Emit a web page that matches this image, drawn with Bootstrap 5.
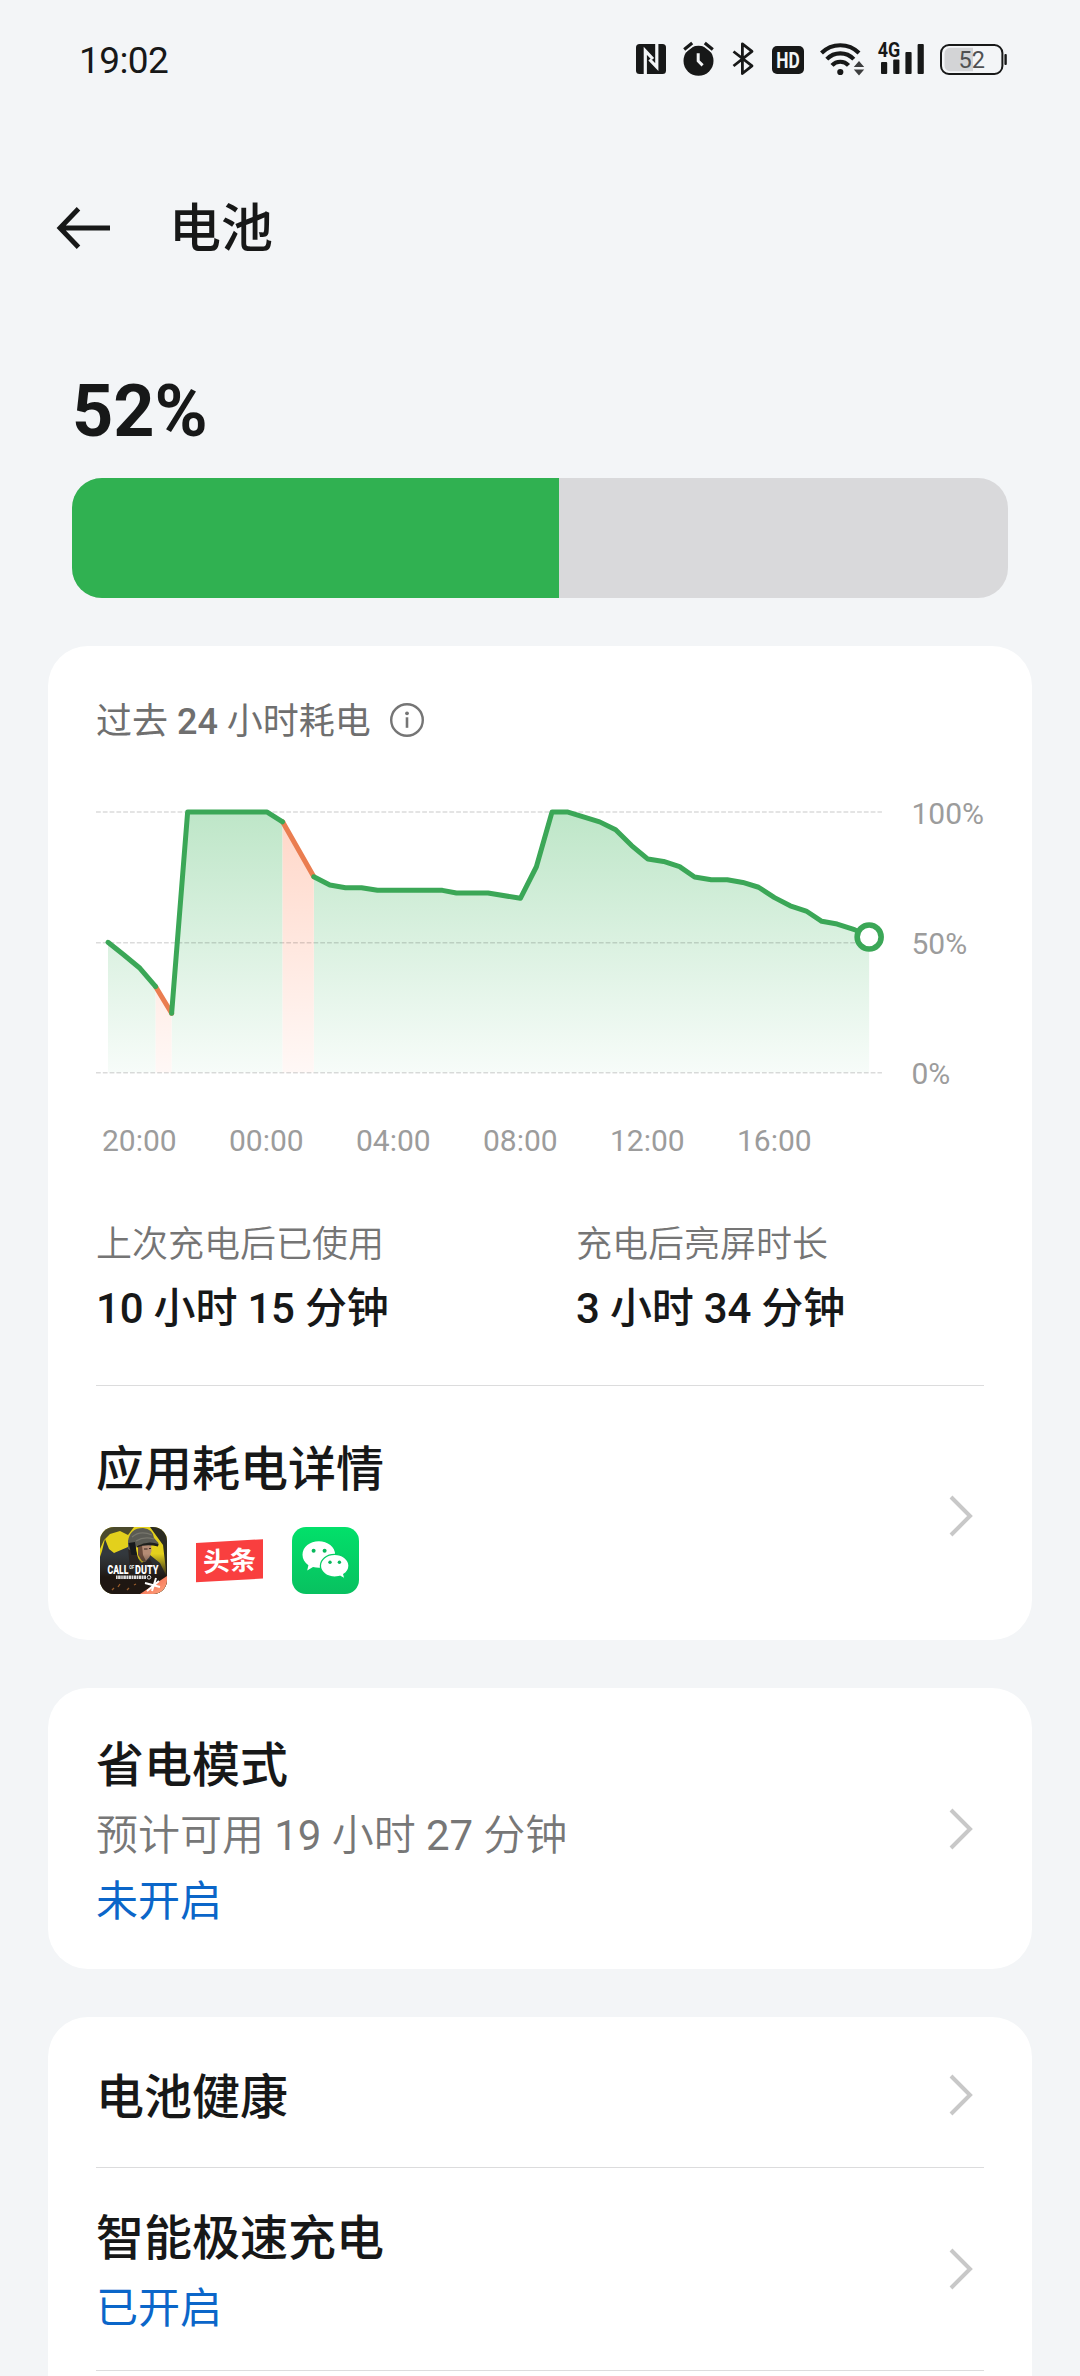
<!DOCTYPE html>
<html lang="zh-CN">
<head>
<meta charset="utf-8">
<meta name="viewport" content="width=device-width, initial-scale=1">
<title>电池</title>
<link href="https://cdn.jsdelivr.net/npm/bootstrap@5.3.0/dist/css/bootstrap.min.css" rel="stylesheet">
<style>
  body { background: #f3f5f7; color: #171818; font-family: Roboto, "Noto Sans CJK SC", sans-serif; }
  .screen { width: 1080px; height: 2376px; }
  .status-bar { height: 120px; padding: 0 72px 0 79px; }
  .clock { font-size: 37px; line-height: 48px; letter-spacing: -.6px; margin-top: 1px; }
  .status-icons svg { height: 36px; display: block; overflow: visible; }
  .status-icons .nfc { margin-right: 17px; }
  .status-icons .alarm { margin-right: 18px; }
  .status-icons .bt { margin-right: 18px; }
  .status-icons .hd { margin-right: 16px; }
  .status-icons .wifi { margin-right: 13px; }
  .status-icons .cell { margin-right: 16px; }
  .title-bar { height: 216px; padding: 0 56px; }
  .page-title { font-size: 52px; line-height: 68px; font-weight: 500; margin: 4px 0 0 57px; }
  .level { padding: 34px 72px 0; }
  .level-num { font-size: 72px; line-height: 84px; font-weight: 700; }
  .level .progress { height: 120px; margin-top: 24px; border-radius: 30px; background: #d9d9db; }
  .level .progress-bar { background: #30b151; }
  .panel { margin: 48px 48px 0; border: 0; border-radius: 40px; background: #fff; padding: 0 48px; color: inherit; }
  .panel-caption { padding-top: 52px; font-size: 36px; line-height: 48px; font-weight: 400; color: #6f6f6f; }
  .panel-caption svg { margin-left: 18px; margin-top: -4px; }
  .chart-row { margin-top: 44px; }
  .y-axis { height: 304px; padding-top: 4px; margin-left: 24px; }
  .axis-text { font-size: 30px; line-height: 40px; color: #9c9c9c; }
  .x-axis { margin-top: 27px; padding-left: 6px; }
  .x-axis span { width: 127px; }
  .stats { margin-top: 60px; }
  .stat { width: 480px; }
  .stat-label { font-size: 36px; line-height: 48px; color: #757575; font-weight: 350; }
  .stat-value { font-size: 42px; line-height: 60px; margin-top: 10px; font-weight: 500; letter-spacing: -.2px; white-space: nowrap; }
  .rule { height: 1px; background: #dcdcdd; }
  .rule-stats { margin-top: 46px; }
  .item-title { font-size: 48px; line-height: 64px; font-weight: 500; }
  .item-note { font-size: 42px; line-height: 60px; color: #777; font-weight: 350; margin-top: 8px; }
  .item-state { font-size: 42px; line-height: 60px; color: #0b66c9; font-weight: 400; }
  .item-apps { padding: 52px 0 46px; }
  .app-icons { margin-top: 25px; padding-left: 4px; gap: 29px; }
  .app-icons svg { display: block; }
  .chevron { margin-right: 10px; flex: none; }
  .item-saver .item-text { padding: 46px 0 37px; }
  .item-saver .item-state { margin-top: 6px; }
  .item-health .item-text { padding: 49px 0 37px; }
  .item-health .chevron { margin-top: 5px; }
  .item-charge .item-text { padding: 39px 0 31px; }
  .item-charge .item-state { margin-top: 8px; }
  .panel-last { border-radius: 40px 40px 0 0; }
</style>
</head>
<body>
<svg width="0" height="0" class="position-absolute" aria-hidden="true">
  <symbol id="chev" viewBox="0 0 26 44"><path d="M3 3 L22 22 L3 41" fill="none" stroke="#c8c8c8" stroke-width="4"/></symbol>
</svg>
<div class="screen d-flex flex-column overflow-hidden">

  <div class="status-bar d-flex justify-content-between align-items-center flex-shrink-0">
    <div class="clock">19:02</div>
    <div class="status-icons d-flex align-items-center">
      <svg class="nfc" width="30" viewBox="0 0 30 36">
        <rect x="0" y="2" width="30" height="30" rx="3.5" fill="#171818"/>
        <path d="M9.3 32 V8.8 L17 17" fill="none" stroke="#f3f5f7" stroke-width="3.2"/>
        <path d="M20.8 2 V25 L13.5 17.5" fill="none" stroke="#f3f5f7" stroke-width="3.2"/>
      </svg>
      <svg class="alarm" width="31" viewBox="0 0 31 36">
        <circle cx="15.5" cy="18.8" r="15" fill="#171818"/>
        <path d="M1.2 8 L9.2 1.6 M29.8 8 L21.8 1.6" stroke="#f3f5f7" stroke-width="6"/>
        <path d="M1.2 7.4 L9.2 1 M29.8 7.4 L21.8 1" stroke="#171818" stroke-width="3.2"/>
        <path d="M15.2 11.3 V19 L19.6 23.4" fill="none" stroke="#f3f5f7" stroke-width="3"/>
      </svg>
      <svg class="bt" width="22" viewBox="0 0 22 36">
        <path d="M1.5 9.5 L20 23.8 L10.4 31.5 V1.8 L20 9.3 L1.5 24" fill="none" stroke="#171818" stroke-width="2.8" stroke-linejoin="round"/>
      </svg>
      <svg class="hd" width="32" viewBox="0 0 32 36">
        <rect x="0" y="4" width="32" height="28" rx="5" fill="#171818"/>
        <text x="4.3" y="25.7" font-family="Roboto, sans-serif" font-weight="700" font-size="21.5" textLength="23.5" lengthAdjust="spacingAndGlyphs" fill="#f3f5f7">HD</text>
      </svg>
      <svg class="wifi" width="45" viewBox="0 0 45 36">
        <g fill="none" stroke="#171818" stroke-width="4.1">
          <path d="M1.5 11 A26.5 26.5 0 0 1 39 11"/>
          <path d="M6.8 17.2 A18.6 18.6 0 0 1 33.8 17.2"/>
          <path d="M12 23.4 A11 11 0 0 1 28.5 23.4"/>
        </g>
        <circle cx="20.3" cy="30" r="3.1" fill="#171818"/>
        <path d="M33.8 25 L39 19 L44.2 25 Z M33.8 27.5 H44.2 L39 33.5 Z" fill="#3d3e3f"/>
      </svg>
      <svg class="cell" width="46" viewBox="0 0 46 36">
        <text x="-.3" y="15.2" font-family="Roboto, sans-serif" font-weight="700" font-size="19.5" textLength="22.5" lengthAdjust="spacingAndGlyphs" fill="#171818">4G</text>
        <g fill="#171818"><rect x="3" y="20" width="6.2" height="12" rx="1"/><rect x="15.2" y="17.5" width="6.2" height="14.5" rx="1"/><rect x="27.4" y="10" width="6.2" height="22" rx="1"/><rect x="39.6" y="2" width="6.2" height="30" rx="1"/></g>
      </svg>
      <svg width="68" viewBox="0 0 68 36">
        <rect x="1" y="3" width="61.4" height="29" rx="8" fill="none" stroke="#171818" stroke-width="2"/>
        <path d="M10 5.8 H33 V29.2 H10 A5.5 5.5 0 0 1 4.5 23.7 V11.3 A5.5 5.5 0 0 1 10 5.8 Z" fill="#d3d4d6"/>
        <rect x="64.4" y="12" width="2.4" height="11" rx="1" fill="#171818"/>
        <text x="18.6" y="26" font-family="Roboto, sans-serif" font-size="23.5" fill="#505152">52</text>
      </svg>
    </div>
  </div>

  <header class="title-bar d-flex align-items-center flex-shrink-0">
    <svg width="56" height="44" viewBox="0 0 56 44"><path d="M54 22 H5 M22.5 2.8 L4 22 L22.5 41.2" fill="none" stroke="#171818" stroke-width="4.9"/></svg>
    <h1 class="page-title">电池</h1>
  </header>

  <section class="level flex-shrink-0">
    <div class="level-num">52%</div>
    <div class="progress"><div class="progress-bar" style="width:52%"></div></div>
  </section>

  <section class="panel card flex-shrink-0">
    <div class="panel-caption d-flex align-items-center">
      <span>过去 <span class="fw-medium" style="font-weight:500">24</span> 小时耗电</span>
      <svg width="36" height="36" viewBox="0 0 36 36"><circle cx="18" cy="18" r="15.8" fill="none" stroke="#757575" stroke-width="2.4"/><circle cx="18" cy="11.3" r="1.9" fill="#757575"/><path d="M18 15.3 V25.8" stroke="#757575" stroke-width="2.6"/></svg>
    </div>
    <div class="chart-row d-flex align-items-start">
      <svg width="792" height="300" viewBox="96 790 792 300">
        <defs>
          <linearGradient id="gg" gradientUnits="userSpaceOnUse" x1="0" y1="812" x2="0" y2="1072"><stop offset="0" stop-color="#bee6c8"/><stop offset="1" stop-color="#f7fcf9"/></linearGradient>
          <linearGradient id="go" gradientUnits="userSpaceOnUse" x1="0" y1="812" x2="0" y2="1072"><stop offset="0" stop-color="#ffd6c7"/><stop offset="1" stop-color="#fff8f6"/></linearGradient>
        </defs>
        <g fill="url(#gg)">
          <path d="M108 942.3 L140 968.3 L155.7 986.7 V1072.5 H108 Z"/>
          <path d="M171.7 1013.3 L187.7 812 H267.3 L282.7 821.7 V1072.5 H171.7 Z"/>
          <path d="M314 876.7 L330 885 L345.7 887.7 H361.7 L377.7 890.3 H442.7 L456.7 893 H488.3 L520.7 898.3 L536.7 866.7 L552.3 812 H568.3 L600 821.8 L616 829.7 L632 845.5 L648.3 859 L664 861.4 L680 866.6 L695 877 L711.7 879.7 H727.7 L743.3 882.4 L759 887.2 L775 897.6 L790.7 905.8 L806.7 911 L822.3 921.3 L837.7 924 L855 929.6 L869.7 937 V1072.5 H314 Z"/>
        </g>
        <g fill="url(#go)">
          <path d="M155.7 986.7 L171.7 1013.3 V1072.5 H155.7 Z"/>
          <path d="M282.7 821.7 L314 876.7 V1072.5 H282.7 Z"/>
        </g>
        <path d="M96 812 H882.5 M96 942.7 H882.5 M96 1072.8 H882.5" stroke="#000" stroke-opacity=".14" stroke-width="1.5" stroke-dasharray="4.8 2"/>
        <g fill="none" stroke="#3ba757" stroke-width="5" stroke-linejoin="round" stroke-linecap="round">
          <path d="M155.7 986.7 L171.7 1013.3 M282.7 821.7 L314 876.7" stroke="#ea7d50"/>
          <path d="M108 942.3 L124 955 L140 968.3 L155.7 986.7"/>
          <path d="M171.7 1013.3 L187.7 812 H267.3 L282.7 821.7"/>
          <path d="M314 876.7 L330 885 L345.7 887.7 H361.7 L377.7 890.3 H442.7 L456.7 893 H488.3 L520.7 898.3 L536.7 866.7 L552.3 812 H568.3 L600 821.8 L616 829.7 L632 845.5 L648.3 859 L664 861.4 L680 866.6 L695 877 L711.7 879.7 H727.7 L743.3 882.4 L759 887.2 L775 897.6 L790.7 905.8 L806.7 911 L822.3 921.3 L837.7 924 L855 929.6 L869.7 937"/>
        </g>
        <circle cx="869.7" cy="937" r="12" fill="#fff" stroke="#3ba757" stroke-width="5.6"/>
      </svg>
      <div class="y-axis axis-text d-flex flex-column justify-content-between"><span>100%</span><span>50%</span><span>0%</span></div>
    </div>
    <div class="x-axis axis-text d-flex"><span>20:00</span><span>00:00</span><span>04:00</span><span>08:00</span><span>12:00</span><span>16:00</span></div>
    <div class="stats d-flex">
      <div class="stat"><div class="stat-label">上次充电后已使用</div><div class="stat-value">10 小时 15 分钟</div></div>
      <div><div class="stat-label">充电后亮屏时长</div><div class="stat-value">3 小时 34 分钟</div></div>
    </div>
    <div class="rule rule-stats"></div>
    <div class="item-apps d-flex justify-content-between align-items-center">
      <div>
        <div class="item-title">应用耗电详情</div>
        <div class="app-icons d-flex">
          <svg width="67" height="67" viewBox="0 0 67 67">
            <defs>
              <clipPath id="cod"><rect width="67" height="67" rx="14"/></clipPath>
              <linearGradient id="dk" x1="0" y1="0" x2="0" y2="1"><stop offset=".4" stop-color="#25241f" stop-opacity="0"/><stop offset=".75" stop-color="#1f1712"/></linearGradient>
              <linearGradient id="badge" x1="0" y1="0" x2="1" y2="1"><stop offset="0" stop-color="#f0543c"/><stop offset="1" stop-color="#ffa982"/></linearGradient>
            </defs>
            <g clip-path="url(#cod)">
              <rect width="67" height="67" fill="#e3d01c"/>
              <path d="M0 0 H34 L28 8 L20 4 L10 7 L4 13 L0 22 Z" fill="#4b4a2c"/>
              <path d="M50 0 H67 V52 L63 18 Z" fill="#2c2c22"/>
              <path d="M2 24 L5 12 L9 22 L14 26 L28 20 L42 36 L50 28 L60 36 L67 50 V67 H0 V30 Z" fill="#33383d"/>
              <path d="M28 20 L34 18 L40 37 L50 32 L54 40 L30 42 Z" fill="#2c2522"/>
              <path d="M38 18 L51 16 L51.5 24 L49.5 30 L45 35 L40 31 Z" fill="#b58c75"/>
              <path d="M38 18 L42 18 L43 28 L46 34 L42 34 L38 28 Z" fill="#6d4d3d"/>
              <path d="M44 22 h3.5 M49 21.5 h2" stroke="#3a2620" stroke-width="1.2"/>
              <path d="M28 14 Q30 1 43 1 Q53 2 54 11 L58.5 16 L58 19 Q48 14 37 19 L34 25 L28 22 Z" fill="#5b5b54"/>
              <path d="M32 10 Q40 3 52 8 M36 14 Q44 9 54 12" fill="none" stroke="#77766c" stroke-width="1.3"/>
              <path d="M37 19 Q48 13 58.5 17 L58 19.5 Q46 16.5 37 20.5 Z" fill="#1f201d"/>
              <path d="M28.5 16 L35 15 L37 28 L31.5 28 Z" fill="#17191b"/>
              <rect width="67" height="67" fill="url(#dk)"/>
              <path d="M18 60 l2 -3 M27 63 l2 -2 M12 63 l2 -2 M34 58 l2 -1" stroke="#9a5d2b" stroke-width="1.3"/>
              <path d="M40 67 L67 49 V67 Z" fill="url(#badge)"/>
              <path d="M45 56 L60 60 M56 51 L52 64 M47 64 L59 54" stroke="#fff" stroke-width="2"/>
              <text x="7.5" y="47" font-family="Roboto, sans-serif" font-weight="900" font-size="12" textLength="21" lengthAdjust="spacingAndGlyphs" fill="#fff">CALL</text>
              <text x="29.3" y="42.4" font-family="Roboto, sans-serif" font-weight="700" font-size="4.6" textLength="5" lengthAdjust="spacingAndGlyphs" fill="#fff">OF</text>
              <text x="35" y="47" font-family="Roboto, sans-serif" font-weight="900" font-size="12" textLength="23.5" lengthAdjust="spacingAndGlyphs" fill="#fff">DUTY</text>
              <path d="M16 50.3 H46" stroke="#ddd" stroke-width="3.6" stroke-dasharray="1.6 .5 2.6 .5"/>
              <circle cx="49" cy="50.3" r="1.8" fill="none" stroke="#ddd" stroke-width="1"/>
            </g>
          </svg>
          <svg width="67" height="67" viewBox="0 0 67 67">
            <path d="M0 16 L67 12.2 V51.5 L0 55.3 Z" fill="#f93f3f"/>
            <text x="33.5" y="43.5" transform="rotate(-3 33.5 33.5)" text-anchor="middle" font-family="'Noto Sans CJK SC', sans-serif" font-weight="700" font-size="26.5" fill="#fff">头条</text>
          </svg>
          <svg width="67" height="67" viewBox="0 0 67 67">
            <defs><linearGradient id="wx" x1="0" y1="0" x2="0" y2="1"><stop offset="0" stop-color="#02e06a"/><stop offset="1" stop-color="#08c160"/></linearGradient></defs>
            <rect width="67" height="67" rx="14" fill="url(#wx)"/>
            <path d="M26.8 14.3 C18 14.3 10.5 20 10.5 27.8 C10.5 32 12.6 35.6 16.4 38.2 L15.2 43.4 L21 40 C23 40.6 25 40.8 27 40.8 C36 40.8 43.2 35 43.2 27.8 C43.2 20 35.6 14.3 26.8 14.3 Z" fill="#fff"/>
            <path d="M42.6 27.3 C50.6 27.3 57 32.4 57 38.8 C57 42.2 55 45.4 51.8 47.4 L53 52 L47.9 49.3 C46.2 49.8 44.5 50.1 42.6 50.1 C34.8 50.1 28.4 45.1 28.4 38.8 C28.4 32.4 34.8 27.3 42.6 27.3 Z" fill="#fff" stroke="#06cd64" stroke-width="1.3"/>
            <g fill="#07b85b"><circle cx="21.6" cy="23.8" r="2"/><circle cx="32.6" cy="23.8" r="2"/><circle cx="38" cy="35.2" r="1.7"/><circle cx="47.4" cy="35.2" r="1.7"/></g>
          </svg>
        </div>
      </div>
      <svg class="chevron" width="26" height="44"><use href="#chev"/></svg>
    </div>
  </section>

  <section class="panel card flex-shrink-0">
    <div class="item-saver d-flex justify-content-between align-items-center">
      <div class="item-text">
        <div class="item-title">省电模式</div>
        <div class="item-note">预计可用 <span class="fw-normal">19</span> 小时 <span class="fw-normal">27</span> 分钟</div>
        <div class="item-state">未开启</div>
      </div>
      <svg class="chevron" width="26" height="44"><use href="#chev"/></svg>
    </div>
  </section>

  <section class="panel panel-last card flex-grow-1">
    <div class="item-health d-flex justify-content-between align-items-center">
      <div class="item-text"><div class="item-title">电池健康</div></div>
      <svg class="chevron" width="26" height="44"><use href="#chev"/></svg>
    </div>
    <div class="rule"></div>
    <div class="item-charge d-flex justify-content-between align-items-center">
      <div class="item-text">
        <div class="item-title">智能极速充电</div>
        <div class="item-state">已开启</div>
      </div>
      <svg class="chevron" width="26" height="44"><use href="#chev"/></svg>
    </div>
    <div class="rule"></div>
  </section>
</div>
<script src="https://cdn.jsdelivr.net/npm/bootstrap@5.3.0/dist/js/bootstrap.bundle.min.js"></script>
</body>
</html>
